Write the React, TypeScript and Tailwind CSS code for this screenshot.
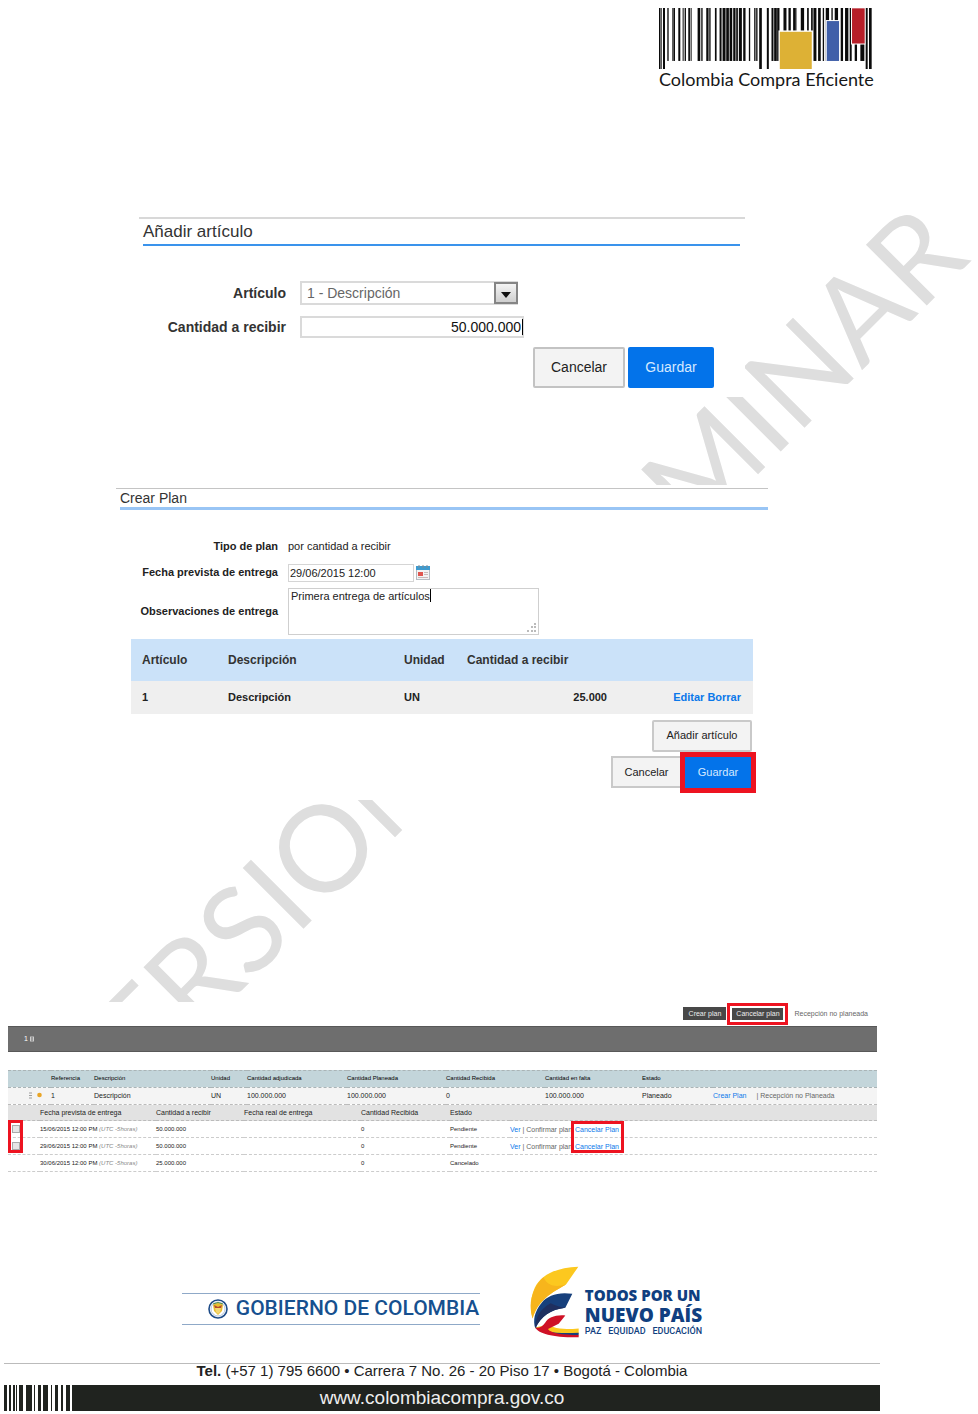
import { ReactNode, useState } from "react";

type Bar = [x: number, width: number, height: number];

const LOGO_BARS: Bar[] = [
  [0, 4, 182], [5, 3, 182], [12, 6, 182], [25, 4, 158], [40, 2, 158], [43, 5, 158],
  [58, 6, 158], [71, 3, 158], [77, 4, 158], [88, 5, 158], [95, 3, 158], [116, 8, 158],
  [127, 4, 158], [142, 7, 158], [151, 4, 158], [168, 5, 158], [182, 6, 158], [191, 9, 158],
  [202, 8, 158], [212, 8, 158], [223, 7, 158], [232, 5, 158], [240, 9, 158], [253, 7, 158],
  [270, 4, 158], [286, 4, 158], [292, 4, 158], [301, 8, 182], [324, 6, 182], [338, 6, 158],
  [346, 8, 158], [355, 7, 158], [374, 9, 158], [389, 7, 158], [403, 8, 158], [411, 2, 158],
  [426, 10, 158], [445, 5, 158], [457, 5, 182], [464, 9, 158], [478, 8, 158], [492, 4, 158],
  [501, 10, 158], [518, 4, 158], [528, 10, 158], [546, 7, 158], [559, 10, 158], [573, 6, 158],
  [588, 7, 158], [605, 12, 158], [621, 6, 182], [631, 8, 182],
];

const FOOTER_BARS = [
  [0, 3], [5, 2], [9, 2], [12, 1], [15, 4], [22, 6], [30, 1], [34, 3], [39, 5], [47, 1], [51, 3], [57, 2], [62, 4],
];

function BarcodeLogo() {
  return (
    <div className="w-[213px]">
      <svg viewBox="0 0 640 182" className="block h-[61px] w-full" preserveAspectRatio="none" aria-hidden="true">
        {LOGO_BARS.map(([x, width, height]) => (
          <rect key={x} x={x} y="0" width={width} height={height} fill="#0b0b0b" />
        ))}
        <rect x="359" y="67" width="104" height="115" fill="#fff" />
        <rect x="363" y="71" width="96" height="111" fill="#ddb135" />
        <rect x="501" y="36" width="42" height="122" fill="#fff" />
        <rect x="504" y="39" width="37" height="119" fill="#405fa9" />
        <rect x="577" y="0" width="43" height="109" fill="#fff" />
        <rect x="580" y="1" width="38" height="105" fill="#b61e28" />
      </svg>
      <div className="font-[Lato] text-[18px] leading-5 whitespace-nowrap text-neutral-900">
        Colombia Compra Eficiente
      </div>
    </div>
  );
}

function Watermark() {
  return (
    <svg viewBox="0 0 978 1414" className="absolute inset-0 -z-10 h-full w-full" aria-hidden="true">
      <g transform="translate(585 585) rotate(-45)">
        <text x="-744" y="44" fontSize="120" fill="#dedede" fontFamily="Lato, 'Liberation Sans', sans-serif">
          VERSION PRELIMINAR
        </text>
      </g>
    </svg>
  );
}

function CalendarIcon() {
  return (
    <svg viewBox="0 0 14 15" className="h-[15px] w-[14px]" aria-hidden="true">
      <rect x="0.5" y="1.5" width="13" height="13" fill="#f3f3f3" stroke="#b5bcc2" />
      <rect x="0" y="1" width="14" height="4" fill="#3d9bd0" />
      <path d="M3 0v3M7 0v3M11 0v3" stroke="#7c8b97" />
      <rect x="2" y="7" width="5" height="4" fill="#e0564f" />
      <path d="M8 7.5h4M8 9.5h4M2 12.5h10" stroke="#c9b9b9" />
    </svg>
  );
}

function Emblem() {
  return (
    <svg viewBox="0 0 20 20" className="h-5 w-5" aria-hidden="true">
      <circle cx="10" cy="10" r="9" fill="#fff" stroke="#1d4b87" strokeWidth="1.6" />
      <circle cx="10" cy="10" r="7" fill="none" stroke="#9fb6d2" strokeWidth="0.8" />
      <path d="M5 6q2-2 5-2t5 2l-1 6-4 4-4-4z" fill="#e9bd2e" />
      <path d="M6 6l4 2 4-2-1 3-3 1-3-1z" fill="#b5482f" />
      <path d="M7 9h6l-1 4-2 2-2-2z" fill="#f2d774" />
      <path d="M5 5q5-3 10 0" fill="none" stroke="#4f8b47" />
    </svg>
  );
}

function FlagSwoosh() {
  return (
    <svg viewBox="0 0 150 220" className="h-[73px] w-[50px]" preserveAspectRatio="none" aria-hidden="true">
      <path d="M145 2C84 4 34 24 14 66 0 98 0 130 8 158 22 112 50 88 108 56Z" fill="#fcc81f" />
      <path d="M40 34C18 54 2 90 2 120 2 136 4 148 8 158 22 112 50 88 108 56 84 62 56 66 40 34Z" fill="#f7b51c" />
      <path d="M127 84C84 78 54 88 34 112 14 136 8 164 16 188 34 152 60 132 106 126Z" fill="#17407c" />
      <path d="M16 188C14 160 30 128 62 112 78 120 92 124 106 126 60 132 34 152 16 188Z" fill="#1f2f5f" />
      <path d="M16 186C44 176 56 180 70 184 92 192 120 190 146 188V204C90 208 38 204 16 186Z" fill="#fcc81f" />
      <path d="M16 182C38 200 84 204 146 201V209C88 212 36 208 16 182Z" fill="#17407c" />
      <path d="M106 149C76 146 54 156 46 170 38 182 28 188 16 186 26 204 70 216 146 215V208C96 208 60 202 54 190L86 174Z" fill="#cf1126" />
    </svg>
  );
}

function Cell({ children, className = "" }: { children?: ReactNode; className?: string }) {
  return <td className={`p-0 text-left whitespace-nowrap ${className}`}>{children}</td>;
}

function HeadCell({ children }: { children?: ReactNode }) {
  return (
    <th scope="col" className="p-0 text-left font-normal whitespace-nowrap">
      {children}
    </th>
  );
}

function AddItemForm() {
  const [amount, setAmount] = useState("50.000.000");

  return (
    <section className="mx-auto mt-32 max-w-[606px] border-t-2 border-[#d8d8d8] bg-white pb-[9px] text-[14px] text-[#333]">
      <h2 className="mr-[5px] ml-1 border-b-2 border-[#3a93ec] text-[17px] leading-[25px]">Añadir artículo</h2>
      <form className="pr-[31px]" onSubmit={(e) => e.preventDefault()}>
        <div className="mt-[35px] flex items-center">
          <label htmlFor="articulo" className="w-[147px] text-right font-bold">
            Artículo
          </label>
          <div className="relative ml-[14px] w-[218px]">
            <select
              id="articulo"
              className="block h-6 w-full appearance-none border-2 border-[#dadada] bg-white pl-[5px] text-[#666]"
            >
              <option>1 - Descripción</option>
            </select>
            <span className="pointer-events-none absolute top-px right-0 flex h-[22px] w-6 items-center justify-center border-2 border-[#858585] bg-linear-to-b from-[#f4f4f4] to-[#cfcfcf]">
              <svg viewBox="0 0 10 6" className="mt-1 h-[6px] w-[10px]" aria-hidden="true">
                <path d="M0 0h10L5 6z" fill="#111" />
              </svg>
            </span>
          </div>
        </div>
        <div className="mt-[11px] flex items-center">
          <label htmlFor="cantidad" className="w-[147px] text-right font-bold whitespace-nowrap">
            Cantidad a recibir
          </label>
          <div className="relative ml-[14px] w-[224px]">
            <input
              id="cantidad"
              value={amount}
              onChange={(e) => setAmount(e.target.value)}
              className="block h-[22px] w-full border-2 border-[#dadada] bg-white pr-px text-right text-[#111]"
            />
            <span className="absolute top-[3px] right-px h-4 w-px bg-black" />
          </div>
        </div>
        <div className="mt-[9px] flex justify-end gap-[3px]">
          <button
            type="button"
            className="h-[41px] w-[92px] rounded-xs border-2 border-[#c3c3c3] bg-[#f3f3f3] text-[#222]"
          >
            Cancelar
          </button>
          <button type="submit" className="h-[41px] w-[86px] rounded-xs bg-[#0373ea] text-[#d6e9ff]">
            Guardar
          </button>
        </div>
      </form>
    </section>
  );
}

function CreatePlanForm() {
  const [date, setDate] = useState("29/06/2015 12:00");
  const [notes, setNotes] = useState("Primera entrega de artículos");

  return (
    <section className="mx-auto mt-[88px] max-w-[652px] bg-white pt-[3px] pb-[7px] text-[11px] text-[#222]">
      <h2 className="border-t border-[#c4c4c4] pl-1 text-[14px] leading-[18px] text-[#333]">Crear Plan</h2>
      <div className="ml-1 h-[3px] bg-[#99c5f5]" />
      <form onSubmit={(e) => e.preventDefault()}>
        <div className="mt-7 flex items-center">
          <span className="w-[162px] text-right font-bold">Tipo de plan</span>
          <span className="ml-[10px]">por cantidad a recibir</span>
        </div>
        <div className="mt-[9px] flex items-center">
          <label htmlFor="fecha" className="w-[162px] text-right font-bold whitespace-nowrap">
            Fecha prevista de entrega
          </label>
          <input
            id="fecha"
            value={date}
            onChange={(e) => setDate(e.target.value)}
            className="ml-[10px] h-[18px] w-[126px] border border-[#d5d5d5] bg-white pl-px"
          />
          <button type="button" aria-label="Calendario" className="ml-[2px]">
            <CalendarIcon />
          </button>
        </div>
        <div className="mt-[6px] flex items-center">
          <label htmlFor="observaciones" className="w-[162px] text-right font-bold whitespace-nowrap">
            Observaciones de entrega
          </label>
          <div className="relative ml-[10px] w-[251px]">
            <textarea
              id="observaciones"
              value={notes}
              onChange={(e) => setNotes(e.target.value)}
              className="block h-[47px] w-full resize-none border border-[#cfcfcf] bg-white pl-[2px] leading-[14px]"
            />
            <span className="absolute top-px left-[142px] h-[13px] w-px bg-black" />
            <svg viewBox="0 0 9 9" className="absolute right-[3px] bottom-[3px] h-[9px] w-[9px]" aria-hidden="true">
              <path d="M7 0h2v2H7zM4 3h2v2H4zM7 3h2v2H7zM0 7h2v2H0zM4 7h2v2H4zM7 7h2v2H7z" fill="#bbb" />
            </svg>
          </div>
        </div>
        <table className="mt-1 ml-[15px] w-[622px] table-fixed text-left">
          <colgroup>
            <col className="w-[97px]" />
            <col className="w-[176px]" />
            <col className="w-[63px]" />
            <col className="w-[140px]" />
            <col />
          </colgroup>
          <thead className="bg-[#cbe2f9] text-[12px] text-[#333]">
            <tr className="h-[42px]">
              <th scope="col" className="py-0 pl-[11px]">Artículo</th>
              <th scope="col" className="p-0">Descripción</th>
              <th scope="col" className="p-0">Unidad</th>
              <th scope="col" className="p-0">Cantidad a recibir</th>
              <td />
            </tr>
          </thead>
          <tbody className="bg-[#efefef] font-bold">
            <tr className="h-[33px]">
              <td className="py-0 pl-[11px]">1</td>
              <td className="p-0">Descripción</td>
              <td className="p-0">UN</td>
              <td className="p-0 text-right">25.000</td>
              <td className="py-0 pr-3 text-right text-[#0a78ea]">
                <a href="#editar">Editar</a> <a href="#borrar">Borrar</a>
              </td>
            </tr>
          </tbody>
        </table>
        <div className="mt-[6px] flex flex-col items-end pr-3">
          <button
            type="button"
            className="mr-1 h-8 w-[100px] rounded-xs border-2 border-[#c9c9c9] bg-[#f3f3f3]"
          >
            Añadir artículo
          </button>
          <div className="flex items-center">
            <button type="button" className="h-8 w-[69px] border-2 border-r-0 border-[#c9c9c9] bg-[#f3f3f3]">
              Cancelar
            </button>
            <button type="submit" className="h-[41px] w-[76px] border-5 border-[#ed1320] bg-[#0373ea] text-[#d6e9ff]">
              Guardar
            </button>
          </div>
        </div>
      </form>
    </section>
  );
}

const deliveries = [
  { date: "15/06/2015 12:00 PM", amount: "50.000.000", status: "Pendiente", open: true },
  { date: "29/06/2015 12:00 PM", amount: "50.000.000", status: "Pendiente", open: true },
  { date: "30/06/2015 12:00 PM", amount: "25.000.000", status: "Cancelado", open: false },
];

function PlanOverview() {
  return (
    <section className="mt-[202px] -ml-1 bg-white pr-[3px] pb-[10px] pl-2 text-[7px] leading-[9px] text-[#222]">
      <div className="flex items-center justify-end pt-px pr-[9px]">
        <button type="button" className="h-[13px] w-[43px] bg-[#484848] whitespace-nowrap text-[#eee]">
          Crear plan
        </button>
        <div className="ml-px border-3 border-[#ed1320] p-[2px]">
          <button type="button" className="block h-[12px] w-[51px] bg-[#484848] whitespace-nowrap text-[#eee]">
            Cancelar plan
          </button>
        </div>
        <a href="#recepcion" className="ml-[6px] text-[#666]">
          Recepción no planeada
        </a>
      </div>
      <div className="mt-px flex h-[26px] items-center border-y border-[#585858] bg-[#6e6e6e] pl-4 text-white">
        1
        <svg viewBox="0 0 4 6" className="ml-[2px] h-[6px] w-1" aria-hidden="true">
          <path d="M0 1h4M0 3h4M0 5h4M.5 1v4M3.5 1v4" stroke="#ddd" strokeWidth=".8" />
        </svg>
      </div>

      <table className="mt-[18px] w-full table-fixed">
        <colgroup>
          <col className="w-[43px]" />
          <col className="w-[43px]" />
          <col className="w-[117px]" />
          <col className="w-[36px]" />
          <col className="w-[100px]" />
          <col className="w-[99px]" />
          <col className="w-[99px]" />
          <col className="w-[97px]" />
          <col className="w-[71px]" />
          <col />
        </colgroup>
        <thead>
          <tr className="h-[17px] border-y border-dashed border-[#aab4b6] bg-[#c3d5da] text-[6px] text-black">
            <td />
            <HeadCell>Referencia</HeadCell>
            <HeadCell>Descripción</HeadCell>
            <HeadCell>Unidad</HeadCell>
            <HeadCell>Cantidad adjudicada</HeadCell>
            <HeadCell>Cantidad Planeada</HeadCell>
            <HeadCell>Cantidad Recibida</HeadCell>
            <HeadCell>Cantidad en falta</HeadCell>
            <HeadCell>Estado</HeadCell>
            <td />
          </tr>
        </thead>
        <tbody>
          <tr className="h-[17px] border-b border-dashed border-[#bbb] bg-[#f4f4f4]">
            <Cell>
              <svg viewBox="0 0 14 7" className="ml-[21px] h-[7px] w-[14px]" aria-hidden="true">
                <path d="M0 1h3M0 3.5h3M0 6h3" stroke="#888" strokeWidth=".8" />
                <circle cx="10.5" cy="3" r="2.3" fill="#e9a526" />
              </svg>
            </Cell>
            <Cell>1</Cell>
            <Cell>Descripción</Cell>
            <Cell>UN</Cell>
            <Cell>100.000.000</Cell>
            <Cell>100.000.000</Cell>
            <Cell>0</Cell>
            <Cell>100.000.000</Cell>
            <Cell>Planeado</Cell>
            <Cell className="text-[#666]">
              <a href="#crear" className="mr-2 text-[#0a78ea]">Crear Plan</a> | Recepción no Planeada
            </Cell>
          </tr>
        </tbody>
      </table>

      <div className="relative">
        <table className="w-full table-fixed">
          <colgroup>
            <col className="w-[32px]" />
            <col className="w-[116px]" />
            <col className="w-[88px]" />
            <col className="w-[117px]" />
            <col className="w-[89px]" />
            <col className="w-[60px]" />
            <col />
          </colgroup>
          <thead>
            <tr className="h-[16px] border-b border-dashed border-[#bbb] bg-[#e2e2e2]">
              <td />
              <HeadCell>Fecha prevista de entrega</HeadCell>
              <HeadCell>Cantidad a recibir</HeadCell>
              <HeadCell>Fecha real de entrega</HeadCell>
              <HeadCell>Cantidad Recibida</HeadCell>
              <HeadCell>Estado</HeadCell>
              <td />
            </tr>
          </thead>
          <tbody>
            {deliveries.map((delivery) => (
              <tr key={delivery.date} className="h-[17px] border-b border-dashed border-[#ccc]">
                <Cell>
                  {delivery.open && (
                    <input
                      type="checkbox"
                      aria-label={delivery.date}
                      className="ml-1 block h-2 w-2 appearance-none border border-[#aaa] bg-[#e6e6e6]"
                    />
                  )}
                </Cell>
                <Cell className="text-[6px]">
                  {delivery.date} <em className="text-[#888]">(UTC -5horas)</em>
                </Cell>
                <Cell className="text-[6px]">{delivery.amount}</Cell>
                <td />
                <Cell className="text-[6px]">0</Cell>
                <Cell className="text-[6px]">{delivery.status}</Cell>
                <Cell className="text-[#666]">
                  {delivery.open && (
                    <div className="flex">
                      <span className="w-[65px]">
                        <a href="#ver" className="text-[#0a78ea]">Ver</a> | Confirmar plan
                      </span>
                      <a href="#cancelar" className="text-[#0a78ea]">Cancelar Plan</a>
                    </div>
                  )}
                </Cell>
              </tr>
            ))}
          </tbody>
        </table>
        <span className="pointer-events-none absolute top-[15px] left-0 h-[33px] w-[15px] border-3 border-[#ed1320]" />
        <span className="pointer-events-none absolute top-[16px] left-[563px] h-[32px] w-[53px] border-3 border-[#ed1320]" />
      </div>
    </section>
  );
}

function Footer() {
  return (
    <footer>
      <div className="mt-[84px] flex items-center justify-center gap-[50px]">
        <div className="mt-3 flex h-8 w-[298px] items-center gap-2 border-y border-[#8fa9c8] pl-[26px] whitespace-nowrap">
          <Emblem />
          <span className="font-[Roboto] text-[21px] font-medium text-[#16508f]">GOBIERNO DE COLOMBIA</span>
        </div>
        <div className="flex items-center gap-[5px] text-[#103f80]">
          <FlagSwoosh />
          <div className="pt-4 font-['Open_Sans'] whitespace-nowrap">
            <div className="text-[15px] leading-5 font-extrabold">TODOS POR UN</div>
            <div className="text-[19px] leading-5 font-extrabold">NUEVO PAÍS</div>
            <div className="flex justify-between font-[Roboto] text-[9px] leading-3 font-medium">
              <span>PAZ</span>
              <span>EQUIDAD</span>
              <span>EDUCACIÓN</span>
            </div>
          </div>
        </div>
      </div>
      <div className="mt-6 border-t border-[#bbb] text-center text-[15px] leading-[14px] text-[#222]">
        <div className="pb-[7px]">
          <b>Tel.</b> (+57 1) 795 6600 • Carrera 7 No. 26 - 20 Piso 17 • Bogotá - Colombia
        </div>
        <div className="relative flex h-[26px] items-center justify-center bg-[#20231f]">
          <svg viewBox="0 0 68 26" className="absolute left-0 h-[26px] w-[68px]" aria-hidden="true">
            <rect width="68" height="26" fill="#fff" />
            {FOOTER_BARS.map(([x, width]) => (
              <rect key={x} x={x} y="0" width={width} height="26" fill="#20231f" />
            ))}
          </svg>
          <a href="#inicio" className="text-[19px] text-[#eee]">www.colombiacompra.gov.co</a>
        </div>
      </div>
    </footer>
  );
}

export default function App() {
  return (
    <div className="relative isolate overflow-hidden bg-white font-['Liberation_Sans',sans-serif]">
      <Watermark />
      <div className="max-w-[880px] pb-[3px] pl-1">
        <header className="flex justify-end pt-2 pr-2">
          <BarcodeLogo />
        </header>
        <AddItemForm />
        <CreatePlanForm />
        <PlanOverview />
        <Footer />
      </div>
    </div>
  );
}
